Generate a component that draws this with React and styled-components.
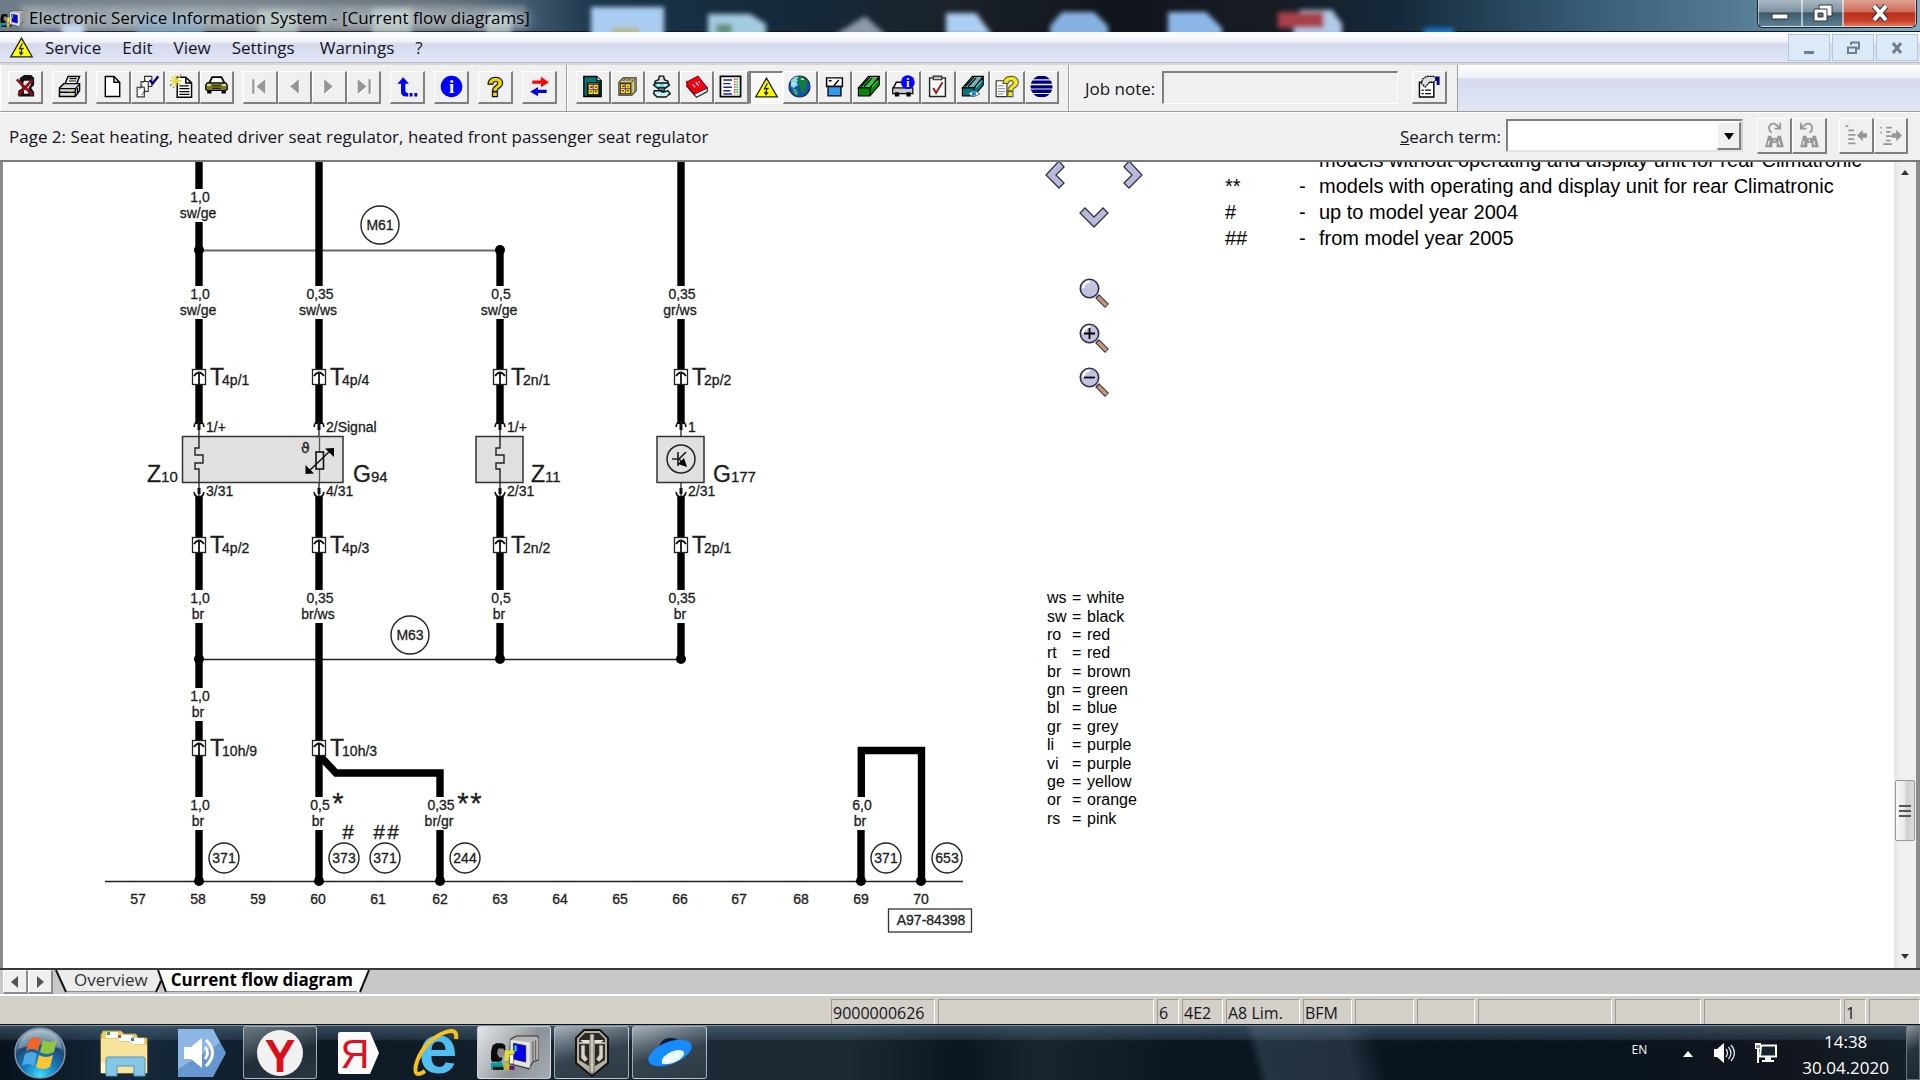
import React from 'react';
import styled, { createGlobalStyle } from 'styled-components';

const Colors = {
  Face: '#f0f0f0',
  Status: '#d4d0c8',
  TabBar: '#c8c8c8',
  Shadow: '#808080',
  Text: '#14141e',
  Navy: '#000080',
};

const UiFont = `"Open Sans", "Noto Sans", sans-serif`;
const DocFont = `"Liberation Sans", Arial, sans-serif`;

const GlobalStyle = createGlobalStyle`
  * { box-sizing: border-box; }
  body { margin: 0; background: ${Colors.Face}; }
  button, input, select { font: inherit; color: inherit; }
  button { padding: 0; cursor: default; }
`;

const Window = styled.div`
  display: flex;
  flex-direction: column;
  height: 100vh;
  overflow: hidden;
  font-family: ${UiFont};
  font-size: 17px;
  line-height: 20px;
  color: ${Colors.Text};
`;

/* ---------- title bar ---------- */

const TitleBar = styled.header`
  position: relative;
  display: flex;
  justify-content: space-between;
  height: 33px;
  border-bottom: 1px solid #f4f6f8;
  box-shadow: inset 0 -1px 0 #10181f;
  background: linear-gradient(90deg, #6d7c88 0, #7d878f 200px, #68737c 440px, #3d566b 535px, #1a3449 600px, #14293a 800px, #1b2129 960px, #10151c 1110px, #171c25 1280px, #142a3c 1400px, #3a6079 1600px, #557c93 1740px, #86adbf 100%);
  overflow: hidden;
`;

const Backdrop = styled.svg`
  position: absolute;
  left: 0;
  top: 0;
`;

const TitleText = styled.h1`
  position: relative;
  display: flex;
  align-items: center;
  gap: 5px;
  margin: 0;
  padding-top: 4px;
  font-size: 17px;
  font-weight: 400;
  color: #000;
  text-shadow: 0 0 8px rgba(255, 255, 255, 0.7), 0 0 14px rgba(255, 255, 255, 0.7);
`;

const Caption = styled.div`
  position: relative;
  display: flex;
  height: 28px;
  margin-right: 3px;
  border: 1px solid #15202a;
  border-top: 0;
  border-radius: 0 0 6px 6px;
  overflow: hidden;
`;

const CaptionButton = styled.button`
  display: flex;
  align-items: center;
  justify-content: center;
  width: ${props => props.$width}px;
  border: 1px solid rgba(255, 255, 255, 0.55);
  border-top: 0;
  background: ${props => props.$danger
    ? 'linear-gradient(#dfa193 0, #cf6a58 45%, #b92f17 50%, #c8402a 80%, #df7a5a 100%)'
    : 'linear-gradient(#a9b9c3 0, #7d929f 45%, #3f596a 50%, #5c7f92 100%)'};
`;

/* ---------- menu ---------- */

const MenuBar = styled.nav`
  display: flex;
  align-items: center;
  height: 30px;
  padding: 0 2px 0 10px;
  background: linear-gradient(#fff 0, #f0f2fa 30%, #d5daed 38%, #e1e6f6 100%);
  border-bottom: 1px solid #b9bdc9;
`;

const MenuItem = styled.button`
  margin-left: ${props => props.$gap || 21}px;
  border: 0;
  background: none;
`;

const MdiButtons = styled.div`
  display: flex;
  gap: 2px;
  margin-left: auto;
`;

const MdiButton = styled.button`
  display: flex;
  align-items: center;
  justify-content: center;
  width: 42px;
  height: 27px;
  border: 1px solid #b4c6d8;
  background: #dceaf7;
`;

/* ---------- tool bar ---------- */

const ToolBar = styled.div`
  display: flex;
  height: 49px;
  border-top: 2px solid #d8d8d8;
  border-bottom: 1px solid #9c9c9c;
  background: linear-gradient(#fff 0, #f0f2fa 26%, #d5daed 32%, #e1e6f6 100%);
`;

const ToolBand = styled.div`
  display: flex;
  align-items: center;
  gap: 9px;
  padding: 0 ${props => props.$end}px 2px ${props => props.$start}px;
  border-right: 1px solid #a0a0a0;
  border-left: 1px solid #fff;
  background: ${Colors.Face};
`;

const Group = styled.div`
  display: flex;
  width: ${props => props.$width}px;
`;

const ToolButton = styled.button`
  display: flex;
  flex: 1;
  align-items: center;
  justify-content: center;
  height: ${props => props.$tall ? 36 : 33}px;
  border: solid;
  border-width: 1px 2px 2px 1px;
  border-color: #fff ${Colors.Shadow} ${Colors.Shadow} #fff;
  background: ${Colors.Face};

  &[aria-pressed='true'] {
    border-width: 2px 1px 1px 2px;
    border-color: ${Colors.Shadow} #fff #fff ${Colors.Shadow};
    background: #f8f8f8;
  }
`;

const FieldLabel = styled.label`
  padding-top: 3px;
  margin-right: ${props => props.$gap || 0}px;
`;

const NoteInput = styled.input`
  width: 236px;
  height: 33px;
  margin: 0 5px 0 -2px;
  border: solid;
  border-width: 2px 1px 1px 2px;
  border-color: ${Colors.Shadow} #fff #fff ${Colors.Shadow};
  background: ${Colors.Face};
`;

/* ---------- info bar ---------- */

const InfoBar = styled.div`
  display: flex;
  align-items: center;
  height: 50px;
  padding: 0 12px 2px 9px;
  border-top: 1px solid #fff;
  border-bottom: 2px solid #7a7a7a;
  background: ${Colors.Face};
`;

const PageName = styled.p`
  flex: 1;
  margin: 0;
  padding-top: 3px;
`;

const Combo = styled.span`
  position: relative;
  display: flex;
  width: 237px;
  height: 33px;
  margin-right: 14px;
`;

const ComboSelect = styled.select`
  appearance: none;
  width: 100%;
  border: 2px solid ${Colors.Shadow};
  border-right-color: #d0d0d0;
  border-bottom-color: #e4e4e4;
  border-radius: 0;
  background: #fff;
`;

const ComboArrow = styled.span`
  position: absolute;
  top: 3px;
  right: 2px;
  bottom: 2px;
  display: flex;
  align-items: center;
  justify-content: center;
  width: 24px;
  border: solid;
  border-width: 1px 2px 2px 1px;
  border-color: #fff ${Colors.Shadow} ${Colors.Shadow} #fff;
  background: ${Colors.Face};
  pointer-events: none;
`;

/* ---------- document ---------- */

const Document = styled.main`
  display: flex;
  flex: 1;
  min-height: 0;
  border: solid #8c8c8c;
  border-width: 0 4px 0 3px;
  background: #fff;
  overflow: hidden;
  font-family: ${DocFont};
  color: #000;
`;

const Sheet = styled.div`
  display: flex;
  flex: 1;
  min-width: 0;
  overflow: hidden;
`;

const Drawing = styled.svg`
  flex: none;
  font-family: ${DocFont};
  font-size: 14px;
  fill: #1c1c1c;

  text {
    stroke: #1c1c1c;
    stroke-width: 0.3;
  }
`;

const SideColumn = styled.div`
  flex: none;
  width: 184px;
  padding-left: 4px;
`;

const PanRow = styled.div`
  display: flex;
  justify-content: space-between;
  width: 98px;
`;

const ZoomColumn = styled.div`
  display: flex;
  flex-direction: column;
  align-items: center;
  width: 98px;
`;

const PanButton = styled.button`
  display: flex;
  border: 0;
  background: none;
  margin-top: ${props => props.$top || 0}px;
`;

const ColorTable = styled.table`
  height: 239px;
  margin: 192px 0 0 2px;
  border-collapse: collapse;
  font-size: 16px;
  line-height: 18px;

  td { padding: 0; }
  td:first-child { width: 25px; }
  td:nth-child(2) { width: 15px; }
`;

const NoteTable = styled.table`
  align-self: flex-start;
  margin-top: -15px;
  border-collapse: collapse;
  font-size: 20px;
  line-height: 26px;
  white-space: nowrap;

  td { padding: 0; }
  td:first-child { width: 74px; }
  td:nth-child(2) { width: 20px; }
`;

const ScrollBar = styled.div`
  display: flex;
  flex-direction: column;
  align-items: center;
  width: 22px;
  padding: 5px 0;
  background: linear-gradient(90deg, #e4e4e4, #f0f0f0 30%);
`;

const ScrollSpace = styled.div`
  flex: ${props => props.$grow};
`;

const Thumb = styled.div`
  display: flex;
  align-items: center;
  justify-content: center;
  width: 20px;
  height: 61px;
  border: 1px solid #979797;
  border-radius: 2px;
  background: linear-gradient(90deg, #f8f8f8 0, #eaeaea 45%, #cfcfd2 60%, #dcdcdc 100%);
`;

/* ---------- sheet tabs ---------- */

const TabBar = styled.div`
  display: flex;
  height: 26px;
  padding-left: 3px;
  border-top: 2px solid #3a3a3a;
  background: ${Colors.TabBar};
  color: #222;
`;

const TabScroll = styled.button`
  display: flex;
  align-items: center;
  justify-content: center;
  width: 25px;
  height: 24px;
  border: solid;
  border-width: 1px 2px 2px 1px;
  border-color: #fff #8c8c8c #8c8c8c #fff;
  background: ${Colors.Face};
`;

const Tab = styled.button`
  height: 22px;
  border: 0;
  border-bottom: 1px solid #8c8c8c;
  padding: 0 ${props => props.$pad}px 2px;
  background: ${props => props['aria-selected'] ? '#fff' : '#ececec'};
  font-weight: ${props => props['aria-selected'] ? 700 : 400};
  line-height: 18px;
  color: ${props => props['aria-selected'] ? '#000' : '#333'};
`;

/* ---------- status bar ---------- */

const StatusBar = styled.footer`
  display: flex;
  justify-content: flex-end;
  gap: 3px;
  height: 30px;
  padding-top: 3px;
  border-top: 2px solid #fff;
  background: ${Colors.Status};
`;

const StatusCell = styled.span`
  width: ${props => props.$width}px;
  padding: 2px 0 0 1px;
  border: solid;
  border-width: 1px;
  border-color: #9a9a9a #fff ${Colors.Status} #9a9a9a;
  font-size: 16px;
  line-height: 22px;
  white-space: nowrap;
`;

/* ---------- task bar ---------- */

const TaskBar = styled.div`
  display: flex;
  align-items: stretch;
  height: 56px;
  border-top: 1px solid #0a1118;
  box-shadow: inset 0 1px 0 #7f95a5;
  background:
    linear-gradient(rgba(120, 150, 175, 0.4) 0, rgba(90, 120, 145, 0.25) 14px, rgba(0, 0, 0, 0) 16px),
    linear-gradient(75deg, rgba(0, 0, 0, 0) 1215px, rgba(90, 110, 125, 0.35) 1225px, rgba(90, 110, 125, 0.3) 1310px, rgba(0, 0, 0, 0) 1340px),
    linear-gradient(90deg, #07111c 0, #15293a 130px, #0c1824 330px, #1a2935 700px, #1b2933 850px, #0a1520 960px, #182530 1040px, #0a1622 1180px, #08131f 1600px, #12161e 1800px, #14202a 100%);
  color: #fff;
`;

const TaskButton = styled.button`
  display: flex;
  align-items: center;
  justify-content: center;
  width: ${props => props.$width}px;
  margin: 1px ${props => props.$gap || 0}px 1px 0;
  border: 1px solid ${props => props.$state ? 'rgba(220, 230, 238, 0.65)' : 'transparent'};
  border-radius: 3px;
  background: ${props => {
    if (props.$state === 'active') return 'linear-gradient(125deg, #e4e6e8 0, #b4b9bd 35%, #8b9298 60%, #a7adb2 100%)';
    if (props.$state === 'open') return 'linear-gradient(165deg, #a9b2ba 0, #6b7884 25%, #35434f 52%, #2c3a46 100%)';
    if (props.$state === 'dim') return 'linear-gradient(165deg, #6a7680 0, #46535f 30%, #1f2d39 55%, #2a3743 100%)';
    return 'none';
  }};
`;

const Tray = styled.div`
  display: flex;
  align-items: center;
  gap: 19px;
  margin-left: auto;
  padding-right: 17px;
`;

const Language = styled.span`
  padding: 0 16px 6px 0;
  font-size: 12px;
`;

const Clock = styled.time`
  padding: 4px 0 0 5px;
  font-size: 17px;
  line-height: 26px;
  text-align: center;
`;

const ShowDesktop = styled.button`
  width: 14px;
  border: 1px solid #68747e;
  background: linear-gradient(150deg, #8d979f, #28343e 45%, #1b2731);
`;

/* ---------- icons ---------- */

const IconSvg = styled.svg`
  overflow: visible;
`;

const Icon = ({ children, size = 23 }) => (
  <IconSvg width={size} height={size} viewBox="0 0 16 16" aria-hidden="true">{children}</IconSvg>
);

const Warning = () => (
  <Icon>
    <path d="M8 1.5 15.5 14.5H.5Z" fill="#ff0" stroke="#222" strokeWidth=".9" />
    <path d="M8.6 5 6.6 9h1.6L7.6 12.6M9.6 8.6 7.4 8.8M6.6 11l1 2 1.6-1.6" fill="none" stroke="#222" strokeWidth=".9" />
  </Icon>
);

const Sheet1 = ({ x = 2.5, y = 1, w = 10, h = 14 }) => (
  <path d={`M${x} ${y}h${w - 4}l4 4v${h - 4}h-${w}zM${x + w - 4} ${y}v4h4`} fill="#fff" stroke="#000" strokeWidth="1" />
);

const Computer = ({ width, height }) => (
  <svg width={width} height={height} viewBox="0 0 24 17" aria-hidden="true">
    <path d="M.5 12V8l.8-3L3 4h3l1.500 1v2L6 9v3l-1 1H1Z" fill="#0c0c0c" />
    <path d="M4 6.500h2.500l.8 2-1 2.500H4.500L3.500 9Z" fill="#8c8c8c" />
    <path d="M.5 13.500h3l2-1 1.500 4.500H.5Z" fill="#00a0a0" />
    <path d="M1.500 15.500h5V17h-5Z" fill="#0c0c0c" />
    <path d="M7 13.500h2.500V17H7Z" fill="#c8c020" />
    <path d="M9.500 15h2.500v2H9.500Z" fill="#70106c" />
    <path d="M10 2 13 .4h10l1 1V12l-3 1-2 3.500L9.500 14Z" fill="#b4b4b4" stroke="#333" strokeWidth=".5" />
    <path d="M10 2.300l9.500 1.200V16L10 13.500Z" fill="#e4e4e4" />
    <path d="M11.500 4l6 1.200v8l-6-1.500Z" fill="#0000e8" stroke="#222" strokeWidth=".4" />
    <path d="M12.500 5v3" stroke="#20c8e8" strokeWidth="1.200" />
    <path d="M21 3v9.500M22.300 2.500V12" stroke="#666" strokeWidth=".6" />
    <path d="M7.500 7.500h4.500v2h-2l-1 3H7Z" fill="#eadf22" />
    <path d="M9.500 9.500h2V14h-2Z" fill="#fff" stroke="#444" strokeWidth=".3" />
  </svg>
);

const ExitIcon = () => (
  <Icon>
    <path d="M4 2 7 0h5l2 2v5l-2 2 2 3v3H3v-4l3-2-2-3Z" fill="#111" />
    <path d="M7 4h4l1 2-2 3H8L6 7Z" fill="#e9e9e9" />
    <path d="M7 9h3v4H7Z" fill="#fff" />
    <path d="M2 3l11 11M13 3 3 14" stroke="#9c0810" strokeWidth="1.8" />
  </Icon>
);

const PrintIcon = () => (
  <Icon>
    <path d="M5 6 7 1h8l-2 5" fill="#fff" stroke="#000" />
    <path d="M8 2.500h5M7.500 4.200h5" stroke="#000" strokeWidth=".8" />
    <path d="M1 9l3-3h11v5l-3 4H1Z" fill="#d8d8d8" stroke="#000" />
    <path d="M1 9.500h11l3-3M1 12h11M12 9.500V15M13.500 9v4" fill="none" stroke="#000" strokeWidth=".9" />
    <path d="M7 11h3" stroke="#e8e000" />
  </Icon>
);

const NewIcon = () => <Icon><Sheet1 x={3} /></Icon>;

const StackIcon = () => (
  <Icon>
    <g fill="#fff" stroke="#333" strokeWidth=".8">
      <path d="M6 1h5v7H6Z" /><path d="M3.500 4.500h5v7h-5Z" /><path d="M.8 8.500h5v6.700h-5Z" />
      <path d="M6.500 3.500 4 6M4.500 7.500 2 10M6.500 10.500 4 14" strokeDasharray="1 .6" />
    </g>
    <path d="M9.500 3.500 11.500 6 15.500.8" fill="none" stroke={Colors.Navy} strokeWidth="1.700" />
  </Icon>
);

const NewNoteIcon = () => (
  <Icon>
    <Sheet1 x={5} y={1.5} w={10} h={14} />
    <path d="M6.500 7.500h6.500M6.500 9.500h7M6.500 11.500h7M6.500 13.500h7" stroke="#000" strokeWidth=".9" />
    <path d="M4 0v8M0 4h8M1 1l6 6M7 1 1 7" stroke="#e4dc30" strokeWidth=".9" />
    <path d="M0 7h1M2 8.500h1M7 0h1" stroke="#555" strokeWidth=".8" />
  </Icon>
);

const CarIcon = () => (
  <Icon>
    <path d="M3 5.500 5 1.500h6.500L13.500 5.500" fill="#fff" stroke="#000" strokeWidth="1.300" />
    <path d="M1.500 5.500h13L15.500 7v3l-1 .8h-13L.5 10V7Z" fill="#7d7a18" stroke="#000" strokeWidth=".8" />
    <path d="M5 7.500h6M5 9.300h6" stroke="#222" strokeWidth=".8" />
    <path d="M1.500 7h2.500M12 7h2.500" stroke="#fff" />
    <path d="M1.500 10.500h3v2.300h-3ZM11.500 10.500h3v2.300h-3Z" fill="#000" />
  </Icon>
);

const NavIcon = ({ d }) => (
  <Icon>
    <path d={d} fill="#fff" transform="translate(.7 .7)" />
    <path d={d} fill="#969696" />
  </Icon>
);

const UpIcon = () => (
  <Icon>
    <path d="M5 1.500 9 6H6.500v5q0 1.500 2 1.500V15H7q-3.500 0-3.500-3.500V6H1Z" fill="#0000f0" />
    <path d="M9.500 12.500h2V15h-2ZM12.800 12.500h2V15h-2Z" fill="#0000f0" />
  </Icon>
);

const Glyph = ({ x, y, size, fill, stroke, family = 'Liberation Serif', children }) => (
  <text x={x} y={y} fontSize={size} fontWeight="700" textAnchor="middle" fill={fill} stroke={stroke} strokeWidth={stroke ? 1.6 : 0} paintOrder="stroke" fontFamily={family}>{children}</text>
);

const InfoIcon = () => (
  <Icon>
    <circle cx="8" cy="8" r="7.500" fill="#0000ff" />
    <Glyph x={8} y={12.5} size={13} fill="#fff">i</Glyph>
  </Icon>
);

const HelpIcon = () => (
  <Icon><Glyph x={8} y={14.5} size={18} fill="#e4d800" stroke="#000" family="Liberation Sans">?</Glyph></Icon>
);

const SwapIcon = () => (
  <Icon>
    <path d="M3 3.800h6V1.200L14.500 5 9 8.500V6H3Z" fill="#f00" />
    <path d="M13 10.300H7V8.300L1.500 11.600 7 14.800v-2.300h6Z" fill="#0000e0" />
  </Icon>
);

const PartGrid = ({ x, y }) => (
  <g transform={`translate(${x} ${y})`}>
    <path d="M0 0h7v7H0Z" fill="#ff0" stroke="#222" strokeWidth=".7" />
    <path d="M1 2h1.500M4.500 2H6M1 5h1.500M4.500 5H6M2.500 1v1.500M5 4v1.500" stroke="#e02030" strokeWidth="1.200" />
    <path d="M3.500 0v7M0 3.500h7" stroke="#2030d0" strokeWidth=".6" />
  </g>
);

const PartsDocIcon = () => (
  <Icon>
    <path d="M2 1h9l3 3v11H2Z" fill="#007878" stroke="#000" />
    <path d="M11 1v3h3M4.500 5.500h8.500V14H4.500Z" fill="#d8d8c0" stroke="#000" strokeWidth=".8" />
    <PartGrid x={5} y={6.5} />
  </Icon>
);

const PartsBoxIcon = () => (
  <Icon>
    <path d="M2 5l3-3h9v9l-3 3H2Z" fill="#e4dc9a" stroke="#333" strokeWidth=".8" />
    <path d="M2 5h9v9M11 5l3-3M5 4l2-2M8 4l2-2M13 4v8M3 3.500h10" fill="none" stroke="#6a6330" strokeWidth=".7" />
    <PartGrid x={3} y={6} />
  </Icon>
);

const PistonIcon = () => (
  <Icon>
    <path d="M6.500.8h3l.5 2.500 2.500 1v2H3.500v-2l2.500-1Z" fill="#e0e0e0" stroke="#111" />
    <path d="M4 5.500h8.500l1 1.500-2.500 2H5L2.500 7Z" fill="#58dce8" stroke="#111" />
    <path d="M6 9h4v2H6Z" fill="#888" stroke="#111" strokeWidth=".8" />
    <path d="M3 11h4l2 1 3.500-1 1.500 2-3 2.300H5L2.500 13Z" fill="#b0f4f4" stroke="#111" />
    <path d="M5 7h2M9.500 7h2M5 13.500h2M9 13.800h3" stroke="#fff" />
  </Icon>
);

const RedBookIcon = () => (
  <Icon>
    <path d="M1 5 9 .8 15.500 9 7 13Z" fill="#f00010" stroke="#500" strokeWidth=".7" />
    <path d="M7 13l8.500-4v2.500L8 15.500 1.500 8V5Z" fill="#fff" stroke="#222" strokeWidth=".8" />
    <path d="M1 5l6 8v2L1 8Z" fill="#a00010" />
    <path d="M1 5 9 .8 15.500 9 7 13Z" fill="#f00010" />
    <path d="M5.500 6.500 7 8.500M7.500 5l2 2.500M9.500 4.500l.8 1" stroke="#fff" strokeWidth=".8" />
  </Icon>
);

const ListIcon = () => (
  <Icon>
    <path d="M1 1h14v14H1Z" fill="#fff" stroke="#000" strokeWidth="1.200" />
    <path d="M3 3.500h6M3 6h5M3 8.500h6M3 11h5M3 13.200h6" stroke="#2020a0" />
    <path d="M11 2.500v11" stroke="#e02030" strokeDasharray="1 .8" />
    <path d="M12.700 2.500v11" stroke="#10c030" strokeWidth="1.200" strokeDasharray="1 .8" />
  </Icon>
);

const GlobeIcon = () => (
  <Icon>
    <circle cx="8" cy="8" r="7.300" fill="#1050b8" stroke="#102050" strokeWidth=".7" />
    <path d="M2 4q2-3 5-3l1 2-2 2 1 2-3 2-2-1Z" fill="#8ad8e8" />
    <path d="M8 1q4 0 6 4l-2 1 1 3-2 4-2-1V9L7 7l1-2-2-2Z" fill="#108030" />
    <path d="M3 9l3 1 1 3-2 1Z" fill="#38b048" />
    <path d="M9 3h2M3 6h2" stroke="#d8f8ff" />
  </Icon>
);

const GaugeIcon = () => (
  <Icon>
    <path d="M2.500 2h11v6h-11Z" fill="#fff" stroke="#000" />
    <path d="M7.500 7.500 11 3.500M4 4h2" stroke="#000" strokeWidth=".9" />
    <path d="M3.500 8h9v6.500h-9Z" fill="#2e9af0" stroke="#000" strokeWidth=".9" />
  </Icon>
);

const Book = ({ fill, light }) => (
  <>
    <path d="M1 9 8 1h7.500L9 9Z" fill={light} stroke="#000" strokeWidth=".8" />
    <path d="M1 9h8l6.500-7v5L9 14.500H1Z" fill={fill} stroke="#000" strokeWidth=".8" />
    <path d="M3 8l6-6.500M9 9v5M5 8l5.500-6" stroke="#000" strokeWidth=".8" />
    <path d="M10.500 8.500 14.500 4" stroke={light} />
  </>
);

const BookIcon = () => <Icon><Book fill="#008a00" light="#3cc83c" /></Icon>;

const CarInfoIcon = () => (
  <Icon>
    <path d="M1 9l2-4h6l2 4" fill="#fff" stroke="#000" />
    <path d="M.5 9h14v4H.5Z" fill="#c8c8c8" stroke="#000" strokeWidth=".8" />
    <path d="M2 12h3v3H2ZM10 12h3v3h-3Z" fill="#000" />
    <circle cx="11" cy="5" r="4.800" fill="#0000ff" />
    <Glyph x={11} y={8} size={9} fill="#fff">i</Glyph>
  </Icon>
);

const ClipboardIcon = () => (
  <Icon>
    <path d="M2.500 2h11v13h-11Z" fill="#fff" stroke="#222" />
    <path d="M5 .8h6v2.500H5Z" fill="#c0c0c0" stroke="#222" strokeWidth=".8" />
    <path d="M5 9l2 3.500L11.500 5" fill="none" stroke="#a01010" strokeWidth="1.300" />
  </Icon>
);

const BookEyeIcon = () => (
  <Icon>
    <Book fill="#007878" light="#70b8b8" />
    <path d="M5 13q4-4 8 0-4 3.500-8 0Z" fill="#fff" stroke="#246" strokeWidth=".6" />
    <circle cx="9" cy="13" r="1.500" fill="#1880d8" />
  </Icon>
);

const DocHelpIcon = () => (
  <Icon>
    <path d="M.8 4h7.500v11H.8Z" fill="#fff" stroke="#333" strokeWidth=".8" />
    <path d="M2 7.500h4M2 9.500h5M2 11.500h5M2 13.300h4" stroke="#888" strokeWidth=".7" />
    <Glyph x={11} y={14.5} size={19} fill="#f4ec00" stroke="#555" family="Liberation Sans">?</Glyph>
  </Icon>
);

const StripesIcon = () => (
  <Icon>
    <clipPath id="ball"><circle cx="8" cy="8" r="7.600" /></clipPath>
    <path clipPath="url(#ball)" d="M0 1.800h16M0 5h16M0 8.200h16M0 11.300h16M0 14.300h16" stroke={Colors.Navy} strokeWidth="2.300" />
  </Icon>
);

const PropertiesIcon = () => (
  <Icon>
    <path d="M1 5h10v10.300H1Z" fill="#fff" stroke="#000" />
    <path d="M2.500 10.500h1.500M5 10.500h4M2.500 13h1.500M5 13h4" stroke="#000" strokeWidth=".9" />
    <path d="M3 3 6 1h5l2 2-2 2H8L5 8.500 2.500 6Z" fill="#ddd" stroke="#000" strokeWidth=".8" strokeDasharray="1.500 .4" />
    <path d="M12 1h3v6h-2V4h-1Z" fill={Colors.Navy} />
  </Icon>
);

const FindIcon = ({ back }) => (
  <svg width="23" height="28" viewBox="0 0 16 19" aria-hidden="true">
    <path d="M3.500 10h2.500v1.500h4V10h2.500l2 8H9.500v-3h-3v3h-5Z" fill="#969696" />
    <path d="M3.500 16.500l.8-3M11.700 16.500l-.8-3M8 12.500v1.500" stroke="#f0f0f0" strokeWidth=".9" />
    <path d={back ? 'M2 1v4h4M2.500 4.500Q7-.5 9.500 3q1 3-1.500 5' : 'M12 1v4H8M11.500 4.500Q7-.5 4.500 3q-1 3 1.500 5'} fill="none" stroke="#969696" strokeWidth="1.200" />
  </svg>
);

const IndentIcon = ({ right }) => (
  <Icon>
    <path d={right ? 'M1 2.500h1M1 6h1M5 2.500h4M5 5.500h3M5 8.500h4M5 11.500h3M3 14h6' : 'M1 1.500h2M3 4.500h4M3 7.500h5M3 10.500h4M3 13.500h5'} stroke="#969696" strokeWidth="1.200" />
    <path d={right ? 'M9 6.500h3V4l4 4-4 4V9.500H9Z' : 'M16 6.500h-3V4L9 8l4 4V9.500h3Z'} fill="#969696" />
  </Icon>
);

const Triangle = ({ d, fill = '#333' }) => (
  <svg width="12" height="12" viewBox="0 0 12 12" aria-hidden="true"><path d={d} fill={fill} /></svg>
);

/* ---------- tool bar data ---------- */

const MAIN_TOOLS = [
  { width: 35, items: [['Exit', <ExitIcon />]] },
  { width: 35, items: [['Print', <PrintIcon />]] },
  { width: 138, items: [['New', <NewIcon />], ['Select job', <StackIcon />], ['New note', <NewNoteIcon />], ['Vehicle', <CarIcon />]] },
  {
    width: 138,
    items: [
      ['First', <NavIcon d="M3 3h1.500v10H3ZM12 3v10L6 8Z" />],
      ['Previous', <NavIcon d="M11 3v10L5 8Z" />],
      ['Next', <NavIcon d="M5 3v10l6-5Z" />],
      ['Last', <NavIcon d="M4 3v10l6-5ZM11.500 3H13v10h-1.500Z" />],
    ],
  },
  { width: 35, items: [['Up', <UpIcon />]] },
  { width: 35, items: [['Information', <InfoIcon />]] },
  { width: 35, items: [['Help', <HelpIcon />]] },
  { width: 35, items: [['Switch', <SwapIcon />]] },
];

const INFO_TOOLS = [
  ['Parts catalogue', <PartsDocIcon />], ['Parts', <PartsBoxIcon />], ['Engine', <PistonIcon />],
  ['Manual', <RedBookIcon />], ['List', <ListIcon />], ['Current flow diagrams', <Warning />],
  ['Internet', <GlobeIcon />], ['Measuring', <GaugeIcon />], ['Green book', <BookIcon />],
  ['Vehicle information', <CarInfoIcon />], ['Inspection', <ClipboardIcon />], ['Book preview', <BookEyeIcon />],
  ['Document help', <DocHelpIcon />], ['Overview list', <StripesIcon />],
];

/* ---------- diagram ---------- */

const WIRES = [
  [199, [[160, 189], [222, 286], [319, 369], [385, 424], [496, 537], [553, 590], [623, 688], [721, 740], [756, 797], [830, 881]]],
  [319, [[160, 286], [319, 369], [385, 424], [496, 537], [553, 590], [623, 740], [756, 797], [830, 881]]],
  [440, [[830, 881]]],
  [500, [[250, 286], [319, 369], [385, 424], [496, 537], [553, 590], [623, 659]]],
  [681, [[160, 286], [319, 369], [385, 424], [496, 537], [553, 590], [623, 659]]],
  [861, [[830, 881]]],
];

const WIRE_LABELS = [
  [199, 189, '1,0', 'sw/ge'], [199, 286, '1,0', 'sw/ge'], [319, 286, '0,35', 'sw/ws'],
  [500, 286, '0,5', 'sw/ge'], [681, 286, '0,35', 'gr/ws'], [199, 590, '1,0', 'br'],
  [319, 590, '0,35', 'br/ws'], [500, 590, '0,5', 'br'], [681, 590, '0,35', 'br'],
  [199, 688, '1,0', 'br'], [199, 797, '1,0', 'br'], [319, 797, '0,5', 'br'],
  [440, 797, '0,35', 'br/gr'], [861, 797, '6,0', 'br'],
];

const CONNECTORS = [
  [199, 369, '4p/1'], [319, 369, '4p/4'], [500, 369, '2n/1'], [681, 369, '2p/2'],
  [199, 537, '4p/2'], [319, 537, '4p/3'], [500, 537, '2n/2'], [681, 537, '2p/1'],
  [199, 740, '10h/9'], [319, 740, '10h/3'],
];

const PINS = [
  [199, '1/+', '3/31'], [319, '2/Signal', '4/31'], [500, '1/+', '2/31'], [681, '1', '2/31'],
];

const DOTS = [[199, 250], [500, 250], [199, 659], [500, 659], [681, 659], [199, 881], [319, 881], [440, 881], [861, 881], [921, 881]];

const NODES = [
  [380, 225, 19, 'M61'], [410, 635, 19, 'M63'], [224, 858, 15, '371'], [344, 858, 15, '373'],
  [385, 858, 15, '371'], [465, 858, 15, '244'], [886, 858, 15, '371'], [947, 858, 15, '653'],
];

const COMPONENTS = [[147, 'Z', '10'], [353, 'G', '94'], [531, 'Z', '11'], [713, 'G', '177']];

const MARKS = [[338, 813, '*', 29], [463, 813, '*', 29], [476, 813, '*', 29], [348, 839, '#', 21], [379, 839, '#', 21], [393, 839, '#', 21]];

const TRACKS = [138, 198, 258, 318, 378, 440, 500, 560, 620, 680, 739, 801, 861, 921];

const Connector = ({ x, y, name }) => (
  <g>
    <rect x={x - 6.5} y={y + 0.5} width="13" height="15" fill="#fff" stroke="#222" strokeWidth="1.300" />
    <path d={`M${x} ${y + 16}v-12M${x - 5} ${y + 7}q5-7 10 0`} fill="none" stroke="#111" strokeWidth="1.800" />
    <text x={x + 11} y={y + 16} fontSize="23">T<tspan fontSize="14" dx="-2">{name}</tspan></text>
  </g>
);

const Pin = ({ x, top, bottom }) => (
  <g>
    <path d={`M${x} 421v16M${x} 482v14`} stroke="#222" strokeWidth="1.3" />
    <path d={`M${x} 424v6M${x} 488v6`} stroke="#111" strokeWidth="3" />
    <path d={`M${x - 5} 427q1-6 5-6t5 6M${x - 5} 492q1 5 5 5t5-5`} fill="none" stroke="#111" strokeWidth="1.6" />
    <text x={x + 7} y="432">{top}</text>
    <text x={x + 7} y="496">{bottom}</text>
  </g>
);

const Heater = ({ x }) => (
  <path d={`M${x} 436v12h-4v7h8v8h-8v6h4v13`} fill="none" stroke="#222" strokeWidth="1.4" />
);

const Diagram = () => (
  <Drawing width="1038" height="806" viewBox="3 162 1038 806" role="img" aria-label="Current flow diagram">
    <path d="M199 250.5H500" stroke="#6a6a6a" strokeWidth="2" />
    <path d="M199 659.5H681M105 881.500H963" stroke="#222" strokeWidth="1.300" />
    {WIRES.map(([x, parts]) => parts.map(([from, to]) => (
      <path key={`${x}-${from}`} d={`M${x} ${from}V${to}`} stroke="#000" strokeWidth="7.400" />
    )))}
    <path d="M320 756 336 773H440V797M861.300 797V750.500H921.500V881" fill="none" stroke="#000" strokeWidth="7.400" />
    {DOTS.map(([x, y]) => <circle key={`${x}-${y}`} cx={x} cy={y} r="5" fill="#000" />)}
    {WIRE_LABELS.map(([x, y, size, color]) => (
      <g key={`${x}-${y}`} textAnchor="middle">
        <text x={x + 1} y={y + 13}>{size}</text>
        <text x={x - 1} y={y + 29}>{color}</text>
      </g>
    ))}
    {CONNECTORS.map(([x, y, name]) => <Connector key={name} x={x} y={y} name={name} />)}
    <g fill="#e0e0e0" stroke="#333" strokeWidth="1.500">
      <rect x="182.500" y="436.500" width="160.500" height="46" />
      <rect x="476" y="436.500" width="47" height="46" />
      <rect x="657" y="436.500" width="47" height="46" />
    </g>
    {PINS.map(([x, top, bottom]) => <Pin key={x} x={x} top={top} bottom={bottom} />)}
    <Heater x={199} />
    <Heater x={500} />
    <path d="M319.500 436V482" stroke="#555" strokeWidth="1.300" />
    <rect x="316" y="452" width="7.500" height="17" fill="#e0e0e0" stroke="#111" strokeWidth="1.600" />
    <path d="M309 471 330 451" stroke="#111" strokeWidth="1.500" />
    <path d="M334 448v9l-9-8.500ZM305.500 474v-9l8.500 8.500Z" fill="#000" />
    <text x="301" y="453" fontFamily="DejaVu Sans">ϑ</text>
    <circle cx="681" cy="459" r="14" fill="none" stroke="#222" strokeWidth="1.500" />
    <path d="M672 459h6M678 452v14M679 459l7-7M679 459l6 6" fill="none" stroke="#222" strokeWidth="1.700" />
    <path d="M687 467l-9-3 6-6Z" fill="#000" />
    {COMPONENTS.map(([x, letter, number]) => (
      <text key={x} x={x} y="482" fontSize="23">{letter}<tspan fontSize="15">{number}</tspan></text>
    ))}
    {NODES.map(([x, y, r, name]) => (
      <g key={x}>
        <circle cx={x} cy={y} r={r} fill="#fff" stroke="#222" strokeWidth="1.400" />
        <text x={x} y={y + 5} textAnchor="middle">{name}</text>
      </g>
    ))}
    {MARKS.map(([x, y, mark, size]) => (
      <text key={x} x={x} y={y} fontSize={size} textAnchor="middle">{mark}</text>
    ))}
    {TRACKS.map((x, i) => <text key={x} x={x} y="904" textAnchor="middle">{57 + i}</text>)}
    <rect x="888.500" y="909" width="83" height="23" fill="#fff" stroke="#333" strokeWidth="1.300" />
    <text x="931" y="925" textAnchor="middle">A97-84398</text>
  </Drawing>
);

const Chevron = ({ width, height, d }) => (
  <svg width={width} height={height} viewBox={`0 0 ${width} ${height}`} aria-hidden="true">
    <path d={d} fill="#b9b9dc" stroke="#333344" strokeWidth="1.300" />
  </svg>
);

const Magnifier = ({ sign }) => (
  <svg width="30" height="30" viewBox="0 0 30 30" aria-hidden="true">
    <path d="M18 18l10 10" stroke="#333" strokeWidth="5.500" />
    <path d="M19 19l8.500 8.500" stroke="#c99578" strokeWidth="3.500" />
    <circle cx="10.500" cy="10.500" r="9.200" fill="#c3c3e0" stroke="#2c2c50" strokeWidth="1.600" />
    <path d="M4 10q1-6 7-6.500" fill="none" stroke="#fff" strokeWidth="2.500" />
    {sign && <path d={sign} stroke="#000" strokeWidth="1.800" />}
  </svg>
);

const COLOR_KEYS = [
  ['ws', 'white'], ['sw', 'black'], ['ro', 'red'], ['rt', 'red'], ['br', 'brown'], ['gn', 'green'], ['bl', 'blue'],
  ['gr', 'grey'], ['li', 'purple'], ['vi', 'purple'], ['ge', 'yellow'], ['or', 'orange'], ['rs', 'pink'],
];

const NOTES = [
  ['*', 'models without operating and display unit for rear Climatronic'],
  ['**', 'models with operating and display unit for rear Climatronic'],
  ['#', 'up to model year 2004'],
  ['##', 'from model year 2005'],
];

const STATUS = [[104, '9000000626'], [216, ''], [22, '6'], [41, '4E2'], [74, 'A8 Lim.'], [49, 'BFM'], [59, ''], [58, ''], [134, ''], [86, ''], [137, ''], [22, '1'], [51, '']];

/* ---------- task bar icons ---------- */

const StartOrb = () => (
  <svg width="52" height="52" viewBox="0 0 52 52" aria-hidden="true">
    <defs>
      <radialGradient id="orb" cx=".5" cy=".95" r=".9">
        <stop offset="0" stopColor="#3fe0ff" /><stop offset=".35" stopColor="#1282c8" /><stop offset=".7" stopColor="#1d4a78" /><stop offset="1" stopColor="#8ea8bc" />
      </radialGradient>
    </defs>
    <circle cx="26" cy="26" r="25" fill="url(#orb)" stroke="#7e93a2" strokeWidth="1.500" />
    <path d="M4 22Q8 3 26 3t22 19q-22-8-44 0Z" fill="#fff" opacity=".28" />
    <path d="M15 13q6-5 12-1l-3 12q-6-4-12 0Z" fill="#ee6428" />
    <path d="M29 13q6 4 14 0l-3 12q-7 4-14 0Z" fill="#8fc63e" />
    <path d="M11 27q6-4 12 0l-3 12q-6-4-12 0Z" fill="#4ea8e6" />
    <path d="M25 28q7 4 14 0l-3 12q-7 4-14 0Z" fill="#fbc632" />
  </svg>
);

const Explorer = () => (
  <svg width="48" height="48" viewBox="0 0 48 48" aria-hidden="true">
    <path d="M3 2h18l3 3h12l2 4h9v35H1V6Z" fill="#e9cd72" stroke="#c09a3c" />
    <path d="M6 3h12v6H6ZM18 6h14v6H18ZM30 9h14v6H30Z" fill="#fff" />
    <path d="M7 3h3v3H7Z" fill="#2ea836" /><path d="M18 6h3v3h-3Z" fill="#e2412e" /><path d="M31 9h3v3h-3Z" fill="#2b80cf" />
    <path d="M1 10h15l3 3h13l3 3h12v28H1Z" fill="#f7e39c" />
    <path d="M1 32l14 12H1Z" fill="#fff6cf" />
    <path d="M6 30q0-2 2-2h35q2 0 2 2v17H34V37H17v10H6Z" fill="#86c6e6" stroke="#4f95bd" />
  </svg>
);

const SoundTag = () => (
  <svg width="48" height="48" viewBox="0 0 48 48" aria-hidden="true">
    <path d="M0 0h35l13 24-13 24H0Z" fill="#6797d0" />
    <path d="M0 0h35l7 14L0 40Z" fill="#8db8e6" />
    <path d="M6 18h7l11-9v30l-11-9H6Z" fill="#fff" />
    <path d="M27 18q5 6 0 12M28 11q13 13 0 26" fill="none" stroke="#fff" strokeWidth="3" />
  </svg>
);

const YandexBrowser = () => (
  <svg width="48" height="48" viewBox="0 0 48 48" aria-hidden="true">
    <circle cx="24" cy="24" r="23" fill="#f1f1f1" />
    <text x="24" y="43" textAnchor="middle" fontFamily="Liberation Sans" fontSize="46" fontWeight="700" fill="#d8101c">Y</text>
  </svg>
);

const YandexTag = () => (
  <svg width="42" height="44" viewBox="0 0 42 44" aria-hidden="true">
    <path d="M2 1h30l9 21-9 21H2Q0 43 0 41V3q0-2 2-2Z" fill="#fafafa" />
    <text x="17" y="37" textAnchor="middle" fontFamily="Liberation Sans" fontSize="40" fill="#e01020">Я</text>
  </svg>
);

const Explorer9 = () => (
  <svg width="48" height="48" viewBox="0 0 48 48" aria-hidden="true">
    <text x="26" y="44" textAnchor="middle" fontFamily="Liberation Sans" fontSize="70" fontWeight="700" fill="#52bdf0">e</text>
    <path d="M13 42Q1 50 4 36 9 16 29 5 46-3 44 10" fill="none" stroke="#f6c01e" strokeWidth="4" />
  </svg>
);

const Shield = () => (
  <svg width="36" height="48" viewBox="0 0 36 48" aria-hidden="true">
    <path d="M10 1h16l8 8v25L18 47 2 34V9Z" fill="#b5b0a6" stroke="#15130f" strokeWidth="2" />
    <path d="M11 4h14l6 6v3H5v-3Z" fill="#2b2822" />
    <path d="M6 11h24l-4 3H10Z" fill="#e6e2d8" />
    <path d="M5 15h10v22L5 31ZM21 15h10v16l-10 6Z" fill="#2b2822" />
    <path d="M16 5h4v37l-2 3-2-3Z" fill="#cdc8bc" stroke="#55504a" strokeWidth=".8" />
    <path d="M7 16h4v10l3 4-3 3-4-4ZM29 16h-4v10l-3 4 3 3 4-4Z" fill="#d9d4c8" stroke="#55504a" strokeWidth=".8" />
  </svg>
);

const Saucer = () => (
  <svg width="46" height="38" viewBox="0 0 46 38" aria-hidden="true">
    <path d="M11 17Q13 3 25 4q6 0 7 5" fill="#0a1c36" />
    <ellipse cx="23" cy="19" rx="23" ry="11" transform="rotate(-22 23 19)" fill="#178bff" />
    <ellipse cx="26" cy="23" rx="12" ry="5.500" transform="rotate(-25 26 23)" fill="#e8f8ff" />
    <path d="M15 30q0-4 4-6l8 4Z" fill="#fff" />
  </svg>
);

const Blur = () => (
  <Backdrop width="1500" height="33" viewBox="0 0 1500 33" aria-hidden="true">
    <filter id="glass" x="-5%" y="-50%" width="110%" height="200%"><feGaussianBlur stdDeviation="2.500" /></filter>
    <g filter="url(#glass)">
      <path d="M20 5h505v24H20Z" fill="#b4bfc6" opacity=".4" />
      <path d="M44 29h15v6H44Z" fill="#555099" /><path d="M62 24h22v12H62Z" fill="#c3d6f0" />
      <path d="M136 14h68v22h-68Z" fill="#7fa5c4" opacity=".7" /><path d="M258 10h40v24h-40Z" fill="#b9cdc8" opacity=".7" />
      <path d="M372 8h40v26h-40ZM486 12h26v22h-26Z" fill="#c4d4d4" opacity=".7" />
      <path d="M591 7h73v30h-73Z" fill="#a9cdf2" /><path d="M612 28h28v8h-28Z" fill="#b9b878" />
      <path d="M708 14h42l16 10v12h-58Z" fill="#a4cce0" /><path d="M716 24h16v10h-16Z" fill="#5f9078" />
      <path d="M865 16l22 20h-54Z" fill="#8b98a8" /><path d="M946 13h30l16 22h-46Z" fill="#accff3" />
      <path d="M1062 12h32l14 14v10h-58V26Z" fill="#86b2e2" /><path d="M1168 12h38l16 16v8h-54Z" fill="#8cb8e8" />
      <path d="M1300 10h32l10 14v12h-50Z" fill="#b2cbe8" /><path d="M1278 12h46v16h-46Z" fill="#a8404a" />
      <path d="M1424 28h30v10h-30Z" fill="#1c78cc" />
    </g>
  </Backdrop>
);

const App = () => (
  <>
    <GlobalStyle />
    <Window>
      <TitleBar>
        <Blur />
        <TitleText>
          <Computer width={24} height={17} />
          Electronic Service Information System - [Current flow diagrams]
        </TitleText>
        <Caption>
          <CaptionButton $width={44} aria-label="Minimize">
            <svg width="18" height="14"><path d="M1 8h16v5H1Z" fill="#fff" stroke="#334" /></svg>
          </CaptionButton>
          <CaptionButton $width={41} aria-label="Restore">
            <svg width="20" height="18"><path d="M6 1h13v11H6Z" fill="#fff" stroke="#334" /><path d="M1 5h13v12H1Z" fill="#fff" stroke="#334" /><path d="M5 9h5v4H5Z" fill="#5c7484" stroke="#334" /></svg>
          </CaptionButton>
          <CaptionButton $width={73} $danger aria-label="Close">
            <svg width="20" height="18"><path d="M4 2l12 14M16 2 4 16" stroke="#334" strokeWidth="6" /><path d="M4 2l12 14M16 2 4 16" stroke="#fff" strokeWidth="4" /></svg>
          </CaptionButton>
        </Caption>
      </TitleBar>

      <MenuBar>
        <Warning />
        <MenuItem $gap={12}>Service</MenuItem>
        <MenuItem>Edit</MenuItem>
        <MenuItem>View</MenuItem>
        <MenuItem>Settings</MenuItem>
        <MenuItem $gap={25}>Warnings</MenuItem>
        <MenuItem>?</MenuItem>
        <MdiButtons>
          <MdiButton aria-label="Minimize document"><svg width="10" height="12"><path d="M0 9h10v3H0Z" fill="#6b7f90" /></svg></MdiButton>
          <MdiButton aria-label="Restore document"><svg width="13" height="13"><path d="M4 1.500h8v6H9M4 1v3M1 6.500h8V12H1Z" fill="none" stroke="#6b7f90" strokeWidth="2" /></svg></MdiButton>
          <MdiButton aria-label="Close document"><svg width="12" height="12"><path d="M2 1l8 10M10 1 2 11" stroke="#6b7f90" strokeWidth="3" /></svg></MdiButton>
        </MdiButtons>
      </MenuBar>

      <ToolBar>
        <ToolBand $start={7} $end={9}>
          {MAIN_TOOLS.map(group => (
            <Group key={group.items[0][0]} $width={group.width}>
              {group.items.map(([label, icon]) => <ToolButton key={label} aria-label={label}>{icon}</ToolButton>)}
            </Group>
          ))}
        </ToolBand>
        <ToolBand $start={8} $end={9}>
          <Group $width={483}>
            {INFO_TOOLS.map(([label, icon]) => (
              <ToolButton key={label} aria-label={label} aria-pressed={label === 'Current flow diagrams'}>{icon}</ToolButton>
            ))}
          </Group>
        </ToolBand>
        <ToolBand $start={15} $end={10}>
          <FieldLabel htmlFor="job-note">Job note:</FieldLabel>
          <NoteInput id="job-note" readOnly />
          <Group $width={35}><ToolButton aria-label="Properties"><PropertiesIcon /></ToolButton></Group>
        </ToolBand>
      </ToolBar>

      <InfoBar>
        <PageName>Page 2: Seat heating, heated driver seat regulator, heated front passenger seat regulator</PageName>
        <FieldLabel htmlFor="search-term" $gap={5}><u>S</u>earch term:</FieldLabel>
        <Combo>
          <ComboSelect id="search-term" defaultValue=""><option value="" /></ComboSelect>
          <ComboArrow><Triangle d="M1 3h10L6 10Z" fill="#000" /></ComboArrow>
        </Combo>
        <Group $width={70}>
          <ToolButton $tall disabled aria-label="Find next"><FindIcon /></ToolButton>
          <ToolButton $tall disabled aria-label="Find previous"><FindIcon back /></ToolButton>
        </Group>
        <ScrollSpace $grow="0 0 12px" />
        <Group $width={69}>
          <ToolButton $tall disabled aria-label="Previous hit"><IndentIcon /></ToolButton>
          <ToolButton $tall disabled aria-label="Next hit"><IndentIcon right /></ToolButton>
        </Group>
      </InfoBar>

      <Document>
        <Sheet>
          <Diagram />
          <SideColumn>
            <PanRow>
              <PanButton aria-label="Pan left"><Chevron width={20} height={28} d="M14-1 1 13l13 13 5-5-8-8 8-8Z" /></PanButton>
              <PanButton aria-label="Pan right"><Chevron width={20} height={28} d="M6-1 19 13 6 26l-5-5 8-8-8-8Z" /></PanButton>
            </PanRow>
            <ZoomColumn>
              <PanButton $top={17} aria-label="Pan down"><Chevron width={30} height={21} d="M1 6 15 20 29 6l-5-5-9 9-9-9Z" /></PanButton>
              <PanButton $top={50} aria-label="Zoom reset"><Magnifier /></PanButton>
              <PanButton $top={15} aria-label="Zoom in"><Magnifier sign="M5 10.500h11M10.500 5v11" /></PanButton>
              <PanButton $top={14} aria-label="Zoom out"><Magnifier sign="M5 10.500h11" /></PanButton>
            </ZoomColumn>
            <ColorTable>
              <tbody>
                {COLOR_KEYS.map(([code, name]) => <tr key={code}><td>{code}</td><td>=</td><td>{name}</td></tr>)}
              </tbody>
            </ColorTable>
          </SideColumn>
          <NoteTable>
            <tbody>
              {NOTES.map(([mark, text]) => <tr key={mark}><td>{mark}</td><td>-</td><td>{text}</td></tr>)}
            </tbody>
          </NoteTable>
        </Sheet>
        <ScrollBar>
          <Triangle d="M2 8h8L6 3Z" />
          <ScrollSpace $grow={602} />
          <Thumb><svg width="12" height="14"><path d="M0 2h12M0 7h12M0 12h12" stroke="#555" strokeWidth="2" /></svg></Thumb>
          <ScrollSpace $grow={110} />
          <Triangle d="M2 3h8L6 8Z" />
        </ScrollBar>
      </Document>

      <TabBar role="tablist">
        <TabScroll aria-label="Scroll tabs left"><Triangle d="M9 0v12L2 6Z" fill="#555" /></TabScroll>
        <TabScroll aria-label="Scroll tabs right"><Triangle d="M3 0v12l7-6Z" fill="#555" /></TabScroll>
        <svg width="14" height="24"><path d="M3 0h11v22h-2Z" fill="#ececec" /><path d="M3 0l10 22" stroke="#111" strokeWidth="2" /></svg>
        <Tab role="tab" aria-selected={false} $pad={7}>Overview</Tab>
        <svg width="12" height="24"><path d="M0 0h4v22H0Z" fill="#ececec" /><path d="M3 0h9v22h-1Z" fill="#fff" /><path d="M3 0l8 22M6 11 1 22" stroke="#111" strokeWidth="2" /></svg>
        <Tab role="tab" aria-selected $pad={4}>Current flow diagram</Tab>
        <svg width="14" height="24"><path d="M0 0h12L3 22H0Z" fill="#fff" /><path d="M12 0 3 22" stroke="#111" strokeWidth="2" /></svg>
      </TabBar>

      <StatusBar>
        {STATUS.map(([width, text], i) => <StatusCell key={i} $width={width}>{text}</StatusCell>)}
      </StatusBar>

      <TaskBar>
        <TaskButton $width={80} aria-label="Start"><StartOrb /></TaskButton>
        <TaskButton $width={88} aria-label="Explorer"><Explorer /></TaskButton>
        <TaskButton $width={68} $gap={7} aria-label="Sound"><SoundTag /></TaskButton>
        <TaskButton $width={74} $gap={3} $state="dim" aria-label="Yandex Browser"><YandexBrowser /></TaskButton>
        <TaskButton $width={78} aria-label="Yandex"><YandexTag /></TaskButton>
        <TaskButton $width={76} $gap={3} aria-label="Internet Explorer"><Explorer9 /></TaskButton>
        <TaskButton $width={74} $gap={3} $state="active" aria-label="Service information"><Computer width={49} height={35} /></TaskButton>
        <TaskButton $width={75} $gap={3} $state="open" aria-label="Game"><Shield /></TaskButton>
        <TaskButton $width={75} $state="open" aria-label="Disk"><Saucer /></TaskButton>
        <Tray>
          <Language>EN</Language>
          <Triangle d="M1 10h10L6 4Z" fill="#fff" />
          <svg width="22" height="22" viewBox="0 0 22 22" aria-hidden="true">
            <path d="M1 7h3l7-6v20l-7-6H1Z" fill="#fff" />
            <path d="M13 7q3 4 0 8M15.500 5q5 6 0 12M18 3q7 8 0 16" fill="none" stroke="#dde" strokeWidth="1.300" />
          </svg>
          <svg width="24" height="24" viewBox="0 0 24 24" aria-hidden="true">
            <path d="M7 4.500h15v11H6Z" fill="#18222c" stroke="#fff" strokeWidth="2" />
            <path d="M11 16h6v3h3v2H8v-2h3Z" fill="#fff" />
            <path d="M1 2h6v6H5v14H3V8H1Z" fill="#fff" /><path d="M3 4v3M5 4v3" stroke="#222" />
          </svg>
          <Clock>14:38<br />30.04.2020</Clock>
        </Tray>
        <ShowDesktop aria-label="Show desktop" />
      </TaskBar>
    </Window>
  </>
);

export default App;
